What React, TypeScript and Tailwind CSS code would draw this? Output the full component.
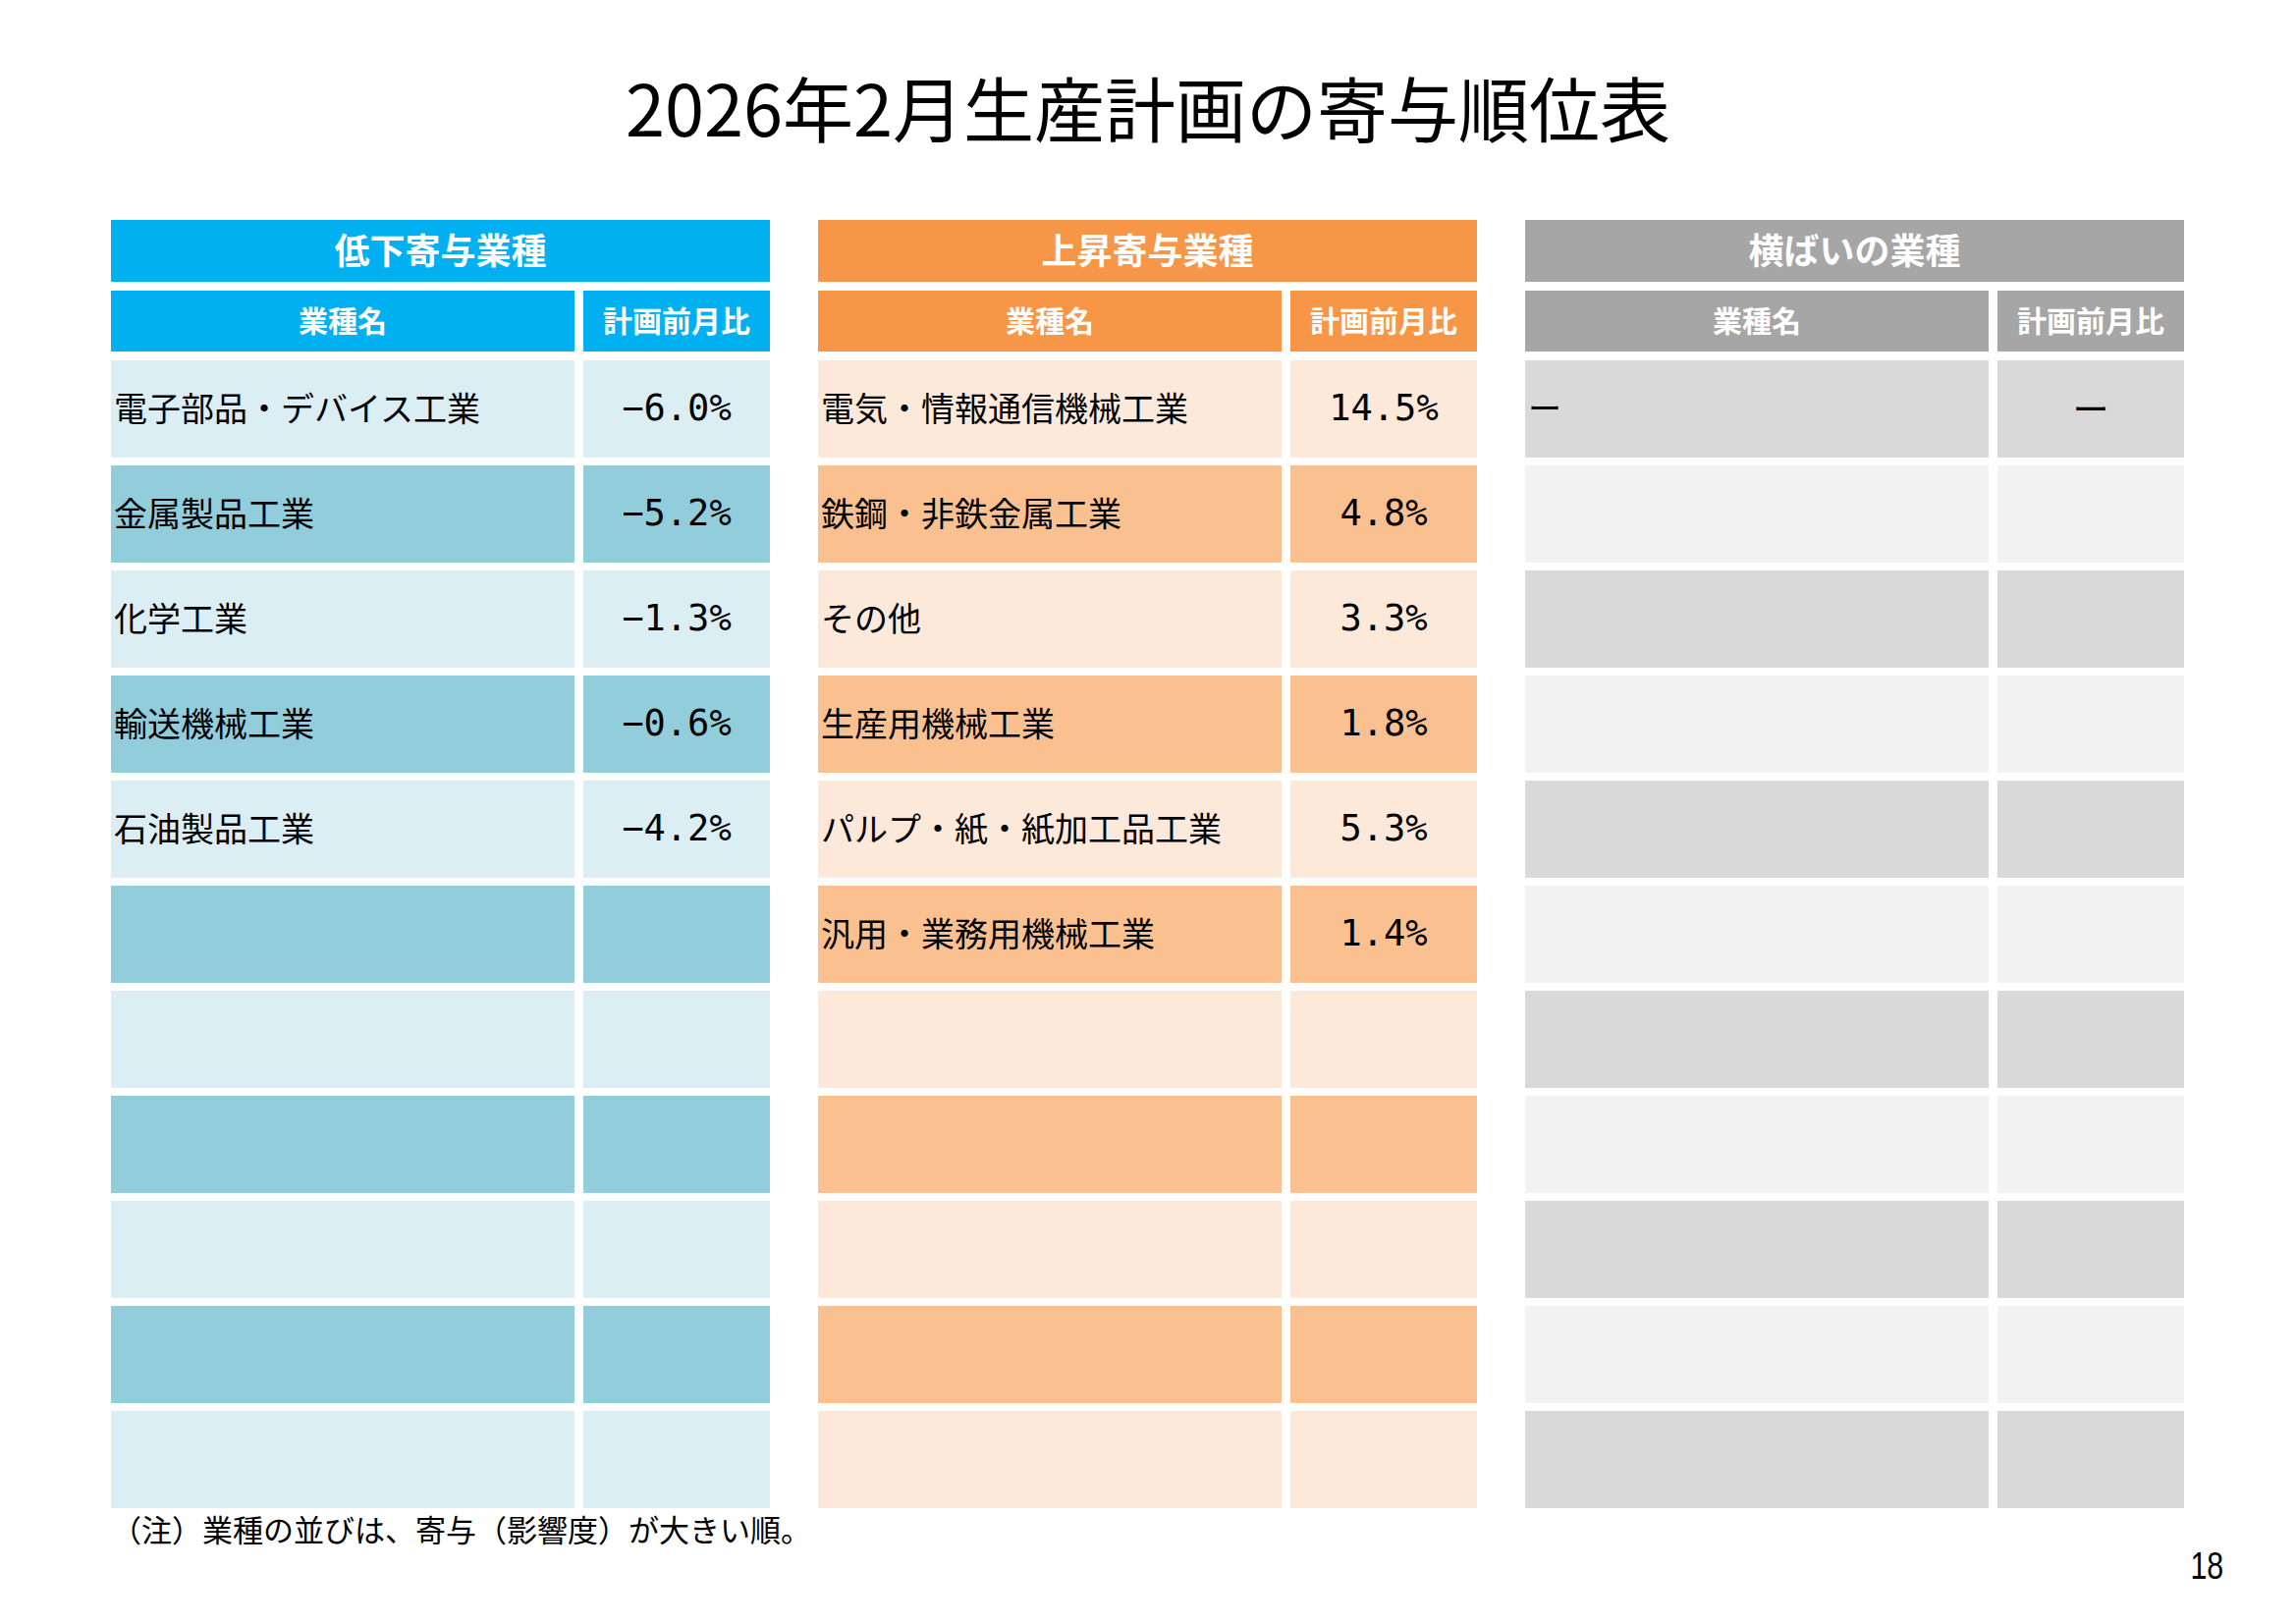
import React from "react";

type Row = { name: string; value: string };

type Panel = {
  title: string;
  head: string;
  light: string;
  dark: string;
  rows: Row[];
};

const fill = (rows: Row[]): Row[] => {
  const out = [...rows];
  while (out.length < 11) out.push({ name: "", value: "" });
  return out;
};

const panels: Panel[] = [
  {
    title: "低下寄与業種",
    head: "bg-[#00b0f0]",
    light: "bg-[#daeef3]",
    dark: "bg-[#92cddc]",
    rows: fill([
      { name: "電子部品・デバイス工業", value: "−6.0%" },
      { name: "金属製品工業", value: "−5.2%" },
      { name: "化学工業", value: "−1.3%" },
      { name: "輸送機械工業", value: "−0.6%" },
      { name: "石油製品工業", value: "−4.2%" },
    ]),
  },
  {
    title: "上昇寄与業種",
    head: "bg-[#f79646]",
    light: "bg-[#fde9d9]",
    dark: "bg-[#fac090]",
    rows: fill([
      { name: "電気・情報通信機械工業", value: "14.5%" },
      { name: "鉄鋼・非鉄金属工業", value: "4.8%" },
      { name: "その他", value: "3.3%" },
      { name: "生産用機械工業", value: "1.8%" },
      { name: "パルプ・紙・紙加工品工業", value: "5.3%" },
      { name: "汎用・業務用機械工業", value: "1.4%" },
    ]),
  },
  {
    title: "横ばいの業種",
    head: "bg-[#a6a6a6]",
    light: "bg-[#d9d9d9]",
    dark: "bg-[#f2f2f2]",
    rows: fill([{ name: "ー", value: "ー" }]),
  },
];

function TablePanel({ panel }: { panel: Panel }) {
  return (
    <div className="w-[671px] flex flex-col">
      <div
        className={`${panel.head} h-[63px] pb-[5px] flex items-center justify-center text-white font-bold text-[36px] leading-none`}
      >
        {panel.title}
      </div>
      <div className="mt-[9px] grid grid-cols-[472px_190px] gap-x-[9px]">
        <div
          className={`${panel.head} h-[62px] pb-[4px] flex items-center justify-center text-white font-bold text-[30px] leading-none`}
        >
          業種名
        </div>
        <div
          className={`${panel.head} h-[62px] pb-[4px] flex items-center justify-center text-white font-bold text-[30px] leading-none`}
        >
          計画前月比
        </div>
      </div>
      <div className="mt-[9px] grid grid-cols-[472px_190px] gap-x-[9px] gap-y-[8px]">
        {panel.rows.map((r, i) => {
          const bg = i % 2 === 0 ? panel.light : panel.dark;
          return (
            <React.Fragment key={i}>
              <div
                className={`${bg} h-[99px] pb-[4px] flex items-center pl-[3px] text-[34px] leading-none text-black`}
              >
                {r.name}
              </div>
              <div
                className={`${bg} h-[99px] pb-[2px] flex items-center justify-center text-[37px] leading-none text-black`}
                style={r.value === "ー" ? undefined : { fontFamily: '"DejaVu Sans Mono", monospace' }}
              >
                {r.value}
              </div>
            </React.Fragment>
          );
        })}
      </div>
    </div>
  );
}

export default function App() {
  return (
    <div
      className="w-[2338px] h-[1654px] bg-white overflow-hidden flex flex-col"
      style={{ fontFamily: '"Noto Sans CJK JP", "Noto Sans", sans-serif' }}
    >
      <h1 className="pt-[72px] h-[147px] text-center text-[72px] leading-none font-normal text-black">
        2026年2月生産計画の寄与順位表
      </h1>
      <div className="mt-[77px] pl-[113px] flex gap-[49px]">
        {panels.map((p) => (
          <TablePanel key={p.title} panel={p} />
        ))}
      </div>
      <div className="mt-[5px] pl-[113px] text-[31px] leading-none text-black">
        （注）業種の並びは、寄与（影響度）が大きい順。
      </div>
      <div
        className="mt-[4px] pr-[74px] text-right text-[38px] leading-none text-black"
        style={{ fontFamily: '"Liberation Sans", Arial, sans-serif' }}
      >
        <span className="inline-block origin-right scale-x-[0.8]">18</span>
      </div>
    </div>
  );
}
